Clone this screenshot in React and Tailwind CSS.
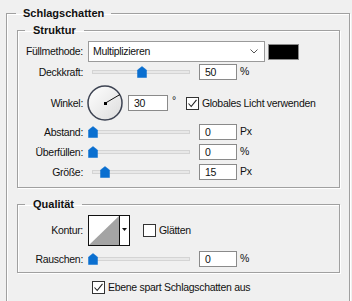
import React from "react";

const Thumb = ({ left }) => (
  <svg
    width="10"
    height="12"
    viewBox="0 0 10 12"
    className="absolute top-[2px]"
    style={{ left }}
  >
    <path d="M5 0.5 L9.5 4 L9.5 11.5 L0.5 11.5 L0.5 4 Z" fill="#0a6fd0" stroke="#0a6fd0" strokeWidth="0.5" strokeLinejoin="round" />
  </svg>
);

const Slider = ({ left }) => (
  <div className="relative ml-[5px] w-[106px] h-[16px] flex items-center">
    <div className="ml-[4px] w-[98px] h-[4px] bg-[#e8e8e8] border border-[#d4d4d4]" />
    <Thumb left={left} />
  </div>
);

const Field = ({ value, w = "w-[38px]", ml = "ml-[5px]" }) => (
  <div className={`${ml} ${w} h-[16px] bg-white border border-[#8a8a8a] flex items-center pl-[5px]`}>
    {value}
  </div>
);

const Unit = ({ children }) => (
  <span className="ml-[3px] self-start mt-[1px]">{children}</span>
);

const Check = ({ ml, checked = true }) => (
  <div className={`${ml} w-[13px] h-[13px] bg-white border border-[#333] flex items-center justify-center shrink-0`}>
    {checked && (
      <svg width="11" height="11" viewBox="0 0 11 11">
        <polyline points="1.5,5.5 4.2,8.5 9.5,1.8" fill="none" stroke="#222" strokeWidth="1.1" />
      </svg>
    )}
  </div>
);

const Label = ({ children }) => (
  <span className="w-[65px] text-right shrink-0">{children}</span>
);

const legendCls = "font-bold leading-[14px] text-[11px] tracking-normal";

export default function App() {
  return (
    <div className="w-[352px] h-[301px] overflow-hidden bg-[#f0f0f0] pt-[6px] pl-[6px] text-[10.5px] tracking-[-0.3px] leading-[13px] text-[#111] font-['Liberation_Sans',Arial,sans-serif]">
      <fieldset className="w-[344px] h-[330px] border border-[#a0a0a0] shadow-[1px_1px_0_#fff,inset_1px_1px_0_#fff]">
        <legend className={`ml-[9px] px-[7px] ${legendCls}`}>Schlagschatten</legend>

        <fieldset className="ml-[10px] mt-[3px] w-[323px] border border-[#a0a0a0] shadow-[1px_1px_0_#fff,inset_1px_1px_0_#fff] pb-[7px]">
          <legend className={`ml-[7px] px-[8px] ${legendCls}`}>Struktur</legend>

          <div className="mt-[4px] h-[21px] flex items-center">
            <Label>Füllmethode:</Label>
            <div className="ml-[5px] w-[177px] h-[21px] bg-white border border-[#9a9a9a] flex items-center justify-between pl-[4px] pr-[6px]">
              <span>Multiplizieren</span>
              <svg width="8" height="5" viewBox="0 0 8 5">
                <polyline points="0.5,0.5 4,4 7.5,0.5" fill="none" stroke="#555" strokeWidth="1" />
              </svg>
            </div>
            <div className="ml-[3px] w-[31px] h-[16px] bg-black border border-[#8a8a8a]" />
          </div>

          <div className="mt-[2px] h-[16px] flex items-center">
            <Label>Deckkraft:</Label>
            <Slider left="49px" />
            <Field value="50" />
            <Unit>%</Unit>
          </div>

          <div className="mt-[5px] h-[36px] flex items-center">
            <Label>Winkel:</Label>
            <svg width="36" height="36" viewBox="0 0 36 36" className="ml-[4px] shrink-0">
              <defs>
                <linearGradient id="dialg" x1="0" y1="0" x2="1" y2="1">
                  <stop offset="0" stopColor="#ffffff" />
                  <stop offset="1" stopColor="#dcdcdc" />
                </linearGradient>
              </defs>
              <circle cx="18" cy="18" r="17" fill="url(#dialg)" stroke="#3d4352" strokeWidth="1.5" />
              <line x1="18.5" y1="18" x2="33" y2="9.5" stroke="#111" strokeWidth="1" />
              <rect x="17" y="17" width="3" height="3" fill="#000" />
            </svg>
            <Field value="30" w="w-[40px]" />
            <span className="ml-[4px] self-start mt-[9px]">°</span>
            <Check ml="ml-[10px]" />
            <span className="ml-[3px]">Globales Licht verwenden</span>
          </div>

          <div className="mt-[3px] h-[16px] flex items-center">
            <Label>Abstand:</Label>
            <Slider left="0px" />
            <Field value="0" />
            <Unit>Px</Unit>
          </div>

          <div className="mt-[4px] h-[16px] flex items-center">
            <Label>Überfüllen:</Label>
            <Slider left="0px" />
            <Field value="0" />
            <Unit>%</Unit>
          </div>

          <div className="mt-[4px] h-[16px] flex items-center">
            <Label>Größe:</Label>
            <Slider left="12px" />
            <Field value="15" />
            <Unit>Px</Unit>
          </div>
        </fieldset>

        <fieldset className="ml-[10px] mt-[9px] w-[323px] border border-[#a0a0a0] shadow-[1px_1px_0_#fff,inset_1px_1px_0_#fff] pb-[5px]">
          <legend className={`ml-[7px] px-[8px] ${legendCls}`}>Qualität</legend>

          <div className="mt-[4px] h-[31px] flex items-center">
            <Label>Kontur:</Label>
            <svg width="42" height="31" viewBox="0 0 42 31" className="ml-[5px] shrink-0">
              <rect x="0.5" y="0.5" width="41" height="30" fill="#fff" stroke="#111" />
              <polygon points="1,30 31,1 31,30" fill="#a4a4a4" />
              <line x1="31.5" y1="0.5" x2="31.5" y2="30.5" stroke="#111" />
              <polygon points="34,13 39,13 36.5,16" fill="#111" />
            </svg>
            <Check ml="ml-[13px]" checked={false} />
            <span className="ml-[3px]">Glätten</span>
          </div>

          <div className="mt-[5px] h-[16px] flex items-center">
            <Label>Rauschen:</Label>
            <Slider left="0px" />
            <Field value="0" />
            <Unit>%</Unit>
          </div>
        </fieldset>

        <div className="mt-[8px] flex items-center h-[13px]">
          <Check ml="ml-[85px]" />
          <span className="ml-[3px]">Ebene spart Schlagschatten aus</span>
        </div>
      </fieldset>
    </div>
  );
}
